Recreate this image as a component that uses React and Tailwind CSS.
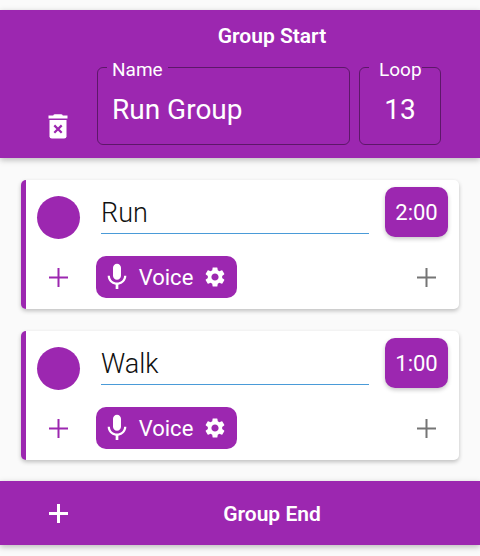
import { MdMic, MdSettings } from "react-icons/md";

const steps = [
  { id: "run", name: "Run", time: "2:00" },
  { id: "walk", name: "Walk", time: "1:00" },
];

function Plus({ stroke = 2 }) {
  return (
    <svg viewBox="0 0 19 19" className="size-[19px]" fill="none" stroke="currentColor" strokeWidth={stroke} aria-hidden="true">
      <path d="M9.5 0V19M0 9.5H19" />
    </svg>
  );
}

function TrashX() {
  return (
    <svg viewBox="0 0 20 25" className="h-[25px] w-5" aria-hidden="true">
      <path fill="currentColor" d="M.5 1.6H5.2Q5.6.2 7 .2H13Q14.400.2 14.800 1.600H19.500V4.600H.5Z" />
      <path fill="currentColor" d="M1.500 6H18.500V22.200Q18.500 24.600 16.100 24.600H3.900Q1.500 24.600 1.500 22.200Z" />
      <path fill="none" stroke="#9c27b0" strokeWidth="2.200" d="M6.300 11.400L13.700 18.800M13.700 11.400L6.300 18.800" />
    </svg>
  );
}

function StepCard({ step }) {
  return (
    <li className="flex flex-col gap-[19px] rounded-[5px] border-l-[5px] border-[#9c27b0] bg-white pt-[7px] pr-[11px] pb-[11px] pl-[11px] shadow-[0_2px_4px_rgba(0,0,0,0.24)]">
      <div className="flex h-[50px] items-center">
        <button type="button" aria-label={`${step.name} colour`} className="mt-[10px] size-[43px] shrink-0 rounded-full bg-[#9c27b0]" />
        <input
          aria-label="Step name"
          defaultValue={step.name}
          className="mr-4 ml-[21px] h-[44px] min-w-0 flex-1 border-b border-[#4a9bd8] bg-transparent pt-[2px] text-[27px] font-light text-[#111] outline-none"
        />
        <button type="button" className="h-[50px] w-[63px] shrink-0 rounded-[10px] bg-[#9c27b0] text-[22px] text-white shadow-[0_2px_4px_rgba(0,0,0,0.22)]">
          {step.time}
        </button>
      </div>
      <div className="flex h-[42px] items-center">
        <button type="button" aria-label="Add action" className="flex h-full w-[43px] items-center justify-center text-[#9c27b0]">
          <Plus />
        </button>
        <button type="button" className="ml-4 flex h-full w-[141px] items-center rounded-[10px] bg-[#9c27b0] pl-[5px] text-[22px] text-white">
          <MdMic className="size-8" aria-hidden="true" />
          <span className="flex-1 pr-1 text-center">Voice</span>
          <MdSettings className="mr-[10px] size-6" aria-hidden="true" />
        </button>
        <button type="button" aria-label="Add step" className="ml-auto flex h-full w-[43px] items-center justify-center text-[#757575]">
          <Plus />
        </button>
      </div>
    </li>
  );
}

export default function App() {
  return (
    <main className="min-h-screen bg-[#fafafa] pt-[10px] font-['Roboto','Liberation_Sans',sans-serif]">
      <header className="flex bg-[#9c27b0] pt-[14px] pb-[13px] text-white shadow-[0_2px_6px_rgba(0,0,0,0.26)]">
        <div className="flex w-[97px] shrink-0 items-end pb-[6px] pl-12">
          <button type="button" aria-label="Delete group">
            <TrashX />
          </button>
        </div>
        <div className="min-w-0 flex-1 pr-[33px]">
          <h1 className="text-center text-[21px] leading-6 font-semibold">Group Start</h1>
          <div className="mt-[6px] flex gap-[9px] pr-[6px]">
            <fieldset className="min-w-0 flex-1 rounded-[6px] border border-black/40 px-[9px]">
              <legend className="px-[5px] pt-[6px] text-[19px] leading-5">
                <label htmlFor="group-name">Name</label>
              </legend>
              <input id="group-name" defaultValue="Run Group" className="h-[64px] w-full bg-transparent px-[5px] pb-[6px] text-[28px] outline-none" />
            </fieldset>
            <fieldset className="w-[82px] shrink-0 rounded-[6px] border border-black/40 px-[9px]">
              <legend className="pt-[6px] pl-[10px] text-[19px] leading-5">
                <label htmlFor="group-loop">Loop</label>
              </legend>
              <input id="group-loop" defaultValue="13" inputMode="numeric" className="h-[64px] w-full bg-transparent pb-[6px] text-center text-[28px] outline-none" />
            </fieldset>
          </div>
        </div>
      </header>

      <ul className="flex flex-col gap-[22px] px-[21px] pt-[22px] pb-[21px]">
        {steps.map((step) => (
          <StepCard key={step.id} step={step} />
        ))}
      </ul>

      <footer className="flex h-16 items-center bg-[#9c27b0] text-white shadow-[0_2px_6px_rgba(0,0,0,0.26)]">
        <button type="button" aria-label="Add to group" className="ml-[37px] flex size-[43px] items-center justify-center">
          <Plus stroke={3} />
        </button>
        <h2 className="ml-[17px] flex-1 pt-[2px] pr-[33px] text-center text-[21px] leading-6 font-semibold">Group End</h2>
      </footer>
    </main>
  );
}
